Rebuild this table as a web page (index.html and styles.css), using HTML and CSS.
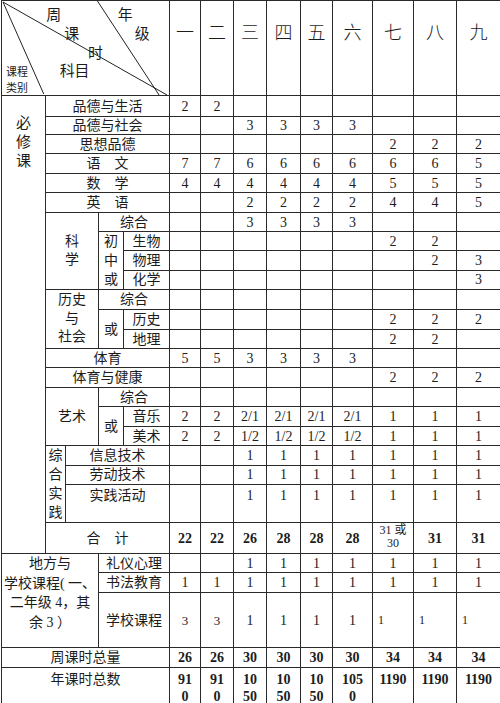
FILE: index.html
```html
<!DOCTYPE html>
<html lang="zh">
<head>
<meta charset="utf-8">
<title>课程设置表</title>
<link rel="stylesheet" href="styles.css">
</head>
<body>
<table class="grid">
<colgroup>
<col class="c1"><col class="c2"><col class="c3"><col class="c4"><col class="c5">
<col class="k1"><col class="k2"><col class="k3"><col class="k4"><col class="k5"><col class="k6"><col class="k7"><col class="k8"><col class="k9">
</colgroup>
<tr class="h95">
<td colspan="5" class="diag">
<svg class="diag-svg" viewBox="0 0 168 94" preserveAspectRatio="none" width="168" height="94">
<line x1="1" y1="1" x2="166" y2="94" stroke="#222" stroke-width="1"/>
<line x1="1" y1="1" x2="42" y2="93" stroke="#222" stroke-width="1"/>
<line x1="96" y1="0" x2="158" y2="94" stroke="#222" stroke-width="1"/>
<g class="dt" text-anchor="middle" dominant-baseline="central">
<text x="52" y="12">周</text>
<text x="124" y="12">年</text>
<text x="70" y="31">课</text>
<text x="141" y="31">级</text>
<text x="94" y="50">时</text>
<text x="73" y="68">科目</text>
<text class="sm" x="15" y="70">课程</text>
<text class="sm" x="15" y="86">类别</text>
</g>
</svg>
</td>
<td class="gh">一</td><td class="gh">二</td><td class="gh">三</td><td class="gh">四</td><td class="gh">五</td><td class="gh">六</td><td class="gh">七</td><td class="gh">八</td><td class="gh">九</td>
</tr>
<tr class="h21"><td rowspan="22" class="req">必<br>修<br>课</td><td colspan="4">品德与生活</td><td>2</td><td>2</td><td></td><td></td><td></td><td></td><td></td><td></td><td></td></tr>
<tr class="h18"><td colspan="4">品德与社会</td><td></td><td></td><td>3</td><td>3</td><td>3</td><td>3</td><td></td><td></td><td></td></tr>
<tr class="h19"><td colspan="4">思想品德</td><td></td><td></td><td></td><td></td><td></td><td></td><td>2</td><td>2</td><td>2</td></tr>
<tr class="h20"><td colspan="4">语　文</td><td>7</td><td>7</td><td>6</td><td>6</td><td>6</td><td>6</td><td>6</td><td>6</td><td>5</td></tr>
<tr class="h19"><td colspan="4">数　学</td><td>4</td><td>4</td><td>4</td><td>4</td><td>4</td><td>4</td><td>5</td><td>5</td><td>5</td></tr>
<tr class="h20"><td colspan="4">英　语</td><td></td><td></td><td>2</td><td>2</td><td>2</td><td>2</td><td>4</td><td>4</td><td>5</td></tr>
<tr class="h19"><td colspan="2" rowspan="4" class="v18">科<br>学</td><td colspan="2">综合</td><td></td><td></td><td>3</td><td>3</td><td>3</td><td>3</td><td></td><td></td><td></td></tr>
<tr class="h19"><td rowspan="3" class="v19">初<br>中<br>或</td><td>生物</td><td></td><td></td><td></td><td></td><td></td><td></td><td>2</td><td>2</td><td></td></tr>
<tr class="h19"><td>物理</td><td></td><td></td><td></td><td></td><td></td><td></td><td></td><td>2</td><td>3</td></tr>
<tr class="h19"><td>化学</td><td></td><td></td><td></td><td></td><td></td><td></td><td></td><td></td><td>3</td></tr>
<tr class="h20"><td colspan="2" rowspan="3" class="v18">历史<br>与<br>社会</td><td colspan="2">综合</td><td></td><td></td><td></td><td></td><td></td><td></td><td></td><td></td><td></td></tr>
<tr class="h20"><td rowspan="2">或</td><td>历史</td><td></td><td></td><td></td><td></td><td></td><td></td><td>2</td><td>2</td><td>2</td></tr>
<tr class="h19"><td>地理</td><td></td><td></td><td></td><td></td><td></td><td></td><td>2</td><td>2</td><td></td></tr>
<tr class="h19"><td colspan="4">体育</td><td>5</td><td>5</td><td>3</td><td>3</td><td>3</td><td>3</td><td></td><td></td><td></td></tr>
<tr class="h20"><td colspan="4">体育与健康</td><td></td><td></td><td></td><td></td><td></td><td></td><td>2</td><td>2</td><td>2</td></tr>
<tr class="h19"><td colspan="2" rowspan="3">艺术</td><td colspan="2">综合</td><td></td><td></td><td></td><td></td><td></td><td></td><td></td><td></td><td></td></tr>
<tr class="h20"><td rowspan="2">或</td><td>音乐</td><td>2</td><td>2</td><td>2/1</td><td>2/1</td><td>2/1</td><td>2/1</td><td>1</td><td>1</td><td>1</td></tr>
<tr class="h19"><td>美术</td><td>2</td><td>2</td><td>1/2</td><td>1/2</td><td>1/2</td><td>1/2</td><td>1</td><td>1</td><td>1</td></tr>
<tr class="h19"><td rowspan="3" class="v19">综<br>合<br>实<br>践</td><td colspan="3">信息技术</td><td></td><td></td><td>1</td><td>1</td><td>1</td><td>1</td><td>1</td><td>1</td><td>1</td></tr>
<tr class="h19"><td colspan="3">劳动技术</td><td></td><td></td><td>1</td><td>1</td><td>1</td><td>1</td><td>1</td><td>1</td><td>1</td></tr>
<tr class="h37 top"><td colspan="3">实践活动</td><td></td><td></td><td>1</td><td>1</td><td>1</td><td>1</td><td>1</td><td>1</td><td>1</td></tr>
<tr class="h31"><td colspan="4">合　计</td><td class="b">22</td><td class="b">22</td><td class="b">26</td><td class="b">28</td><td class="b">28</td><td class="b">28</td><td class="small">31 或<br>30</td><td class="b">31</td><td class="b">31</td></tr>
<tr class="h19"><td colspan="3" rowspan="3" class="local">地方与<br>学校课程( 一、<br>二年级 4，其<br>余 3 ）</td><td colspan="2">礼仪心理</td><td></td><td></td><td>1</td><td>1</td><td>1</td><td>1</td><td>1</td><td>1</td><td>1</td></tr>
<tr class="h20"><td colspan="2">书法教育</td><td>1</td><td>1</td><td>1</td><td>1</td><td>1</td><td>1</td><td>1</td><td>1</td><td>1</td></tr>
<tr class="h55"><td colspan="2">学校课程</td><td class="sm3">3</td><td class="sm3">3</td><td>1</td><td>1</td><td>1</td><td>1</td><td class="left">1</td><td class="left">1</td><td class="left">1</td></tr>
<tr class="h20"><td colspan="5">周课时总量</td><td class="b">26</td><td class="b">26</td><td class="b">30</td><td class="b">30</td><td class="b">30</td><td class="b">30</td><td class="b">34</td><td class="b">34</td><td class="b">34</td></tr>
<tr class="h39 top yr"><td colspan="5">年课时总数</td><td class="b">91<br>0</td><td class="b">91<br>0</td><td class="b">10<br>50</td><td class="b">10<br>50</td><td class="b">10<br>50</td><td class="b">105<br>0</td><td class="b">1190</td><td class="b">1190</td><td class="b">1190</td></tr>
</table>
</body>
</html>
```

FILE: styles.css
```css
html, body {
  margin: 0;
  padding: 0;
  background: #ffffff;
}
body {
  padding-left: 1px;
}
.grid {
  border-collapse: collapse;
  table-layout: fixed;
  width: 499px;
  font-family: "Liberation Serif", "Noto Sans CJK SC", serif;
  font-size: 14px;
  color: #1c1c1c;
}
.grid td {
  border: 1px solid #2a2a2a;
  padding: 0;
  text-align: center;
  vertical-align: middle;
  line-height: 17px;
  overflow: hidden;
  white-space: nowrap;
}
.c1 { width: 44px; }
.c2 { width: 20px; }
.c3 { width: 33px; }
.c4 { width: 25px; }
.c5 { width: 46px; }
.k1 { width: 31px; }
.k2 { width: 33px; }
.k3 { width: 33px; }
.k4 { width: 34px; }
.k5 { width: 32px; }
.k6 { width: 40px; }
.k7 { width: 41px; }
.k8 { width: 43px; }
.k9 { width: 44px; }

.h95 { height: 95px; }
.h18 { height: 18px; }
.h19 { height: 19px; }
.h20 { height: 20px; }
.h21 { height: 21px; }
.h31 { height: 31px; }
.h37 { height: 37px; }
.h39 { height: 39px; }
.h55 { height: 55px; }

.grid td.diag {
  padding: 0;
  vertical-align: top;
  overflow: visible;
}
.diag-svg {
  display: block;
  width: 100%;
  height: 94px;
  overflow: visible;
}
.dt {
  font-family: "Noto Sans CJK SC", sans-serif;
  font-size: 15px;
  fill: #1c1c1c;
}
.dt .sm {
  font-size: 11px;
}
.grid td.gh {
  vertical-align: top;
  padding-top: 20px;
  font-size: 18px;
  line-height: 20px;
  font-family: "Noto Sans CJK SC", sans-serif;
  font-weight: 300;
}
.grid td.req {
  vertical-align: top;
  padding-top: 18px;
  line-height: 19px;
  font-size: 15px;
}
.grid td.v18 { line-height: 18.5px; }
.grid td.v19 { line-height: 19px; }
.top td {
  vertical-align: top;
  padding-top: 2px;
}
.yr td {
  padding-top: 3px;
}
.grid td.b {
  font-weight: bold;
}
.grid td.small {
  font-size: 12px;
  line-height: 13px;
  padding-bottom: 2px;
}
.grid td.local {
  vertical-align: top;
  line-height: 19.5px;
  padding-top: 0;
}
.grid td.left {
  text-align: left;
  padding-left: 5px;
  font-size: 12px;
}
.grid td.sm3 {
  font-size: 13px;
}
```
